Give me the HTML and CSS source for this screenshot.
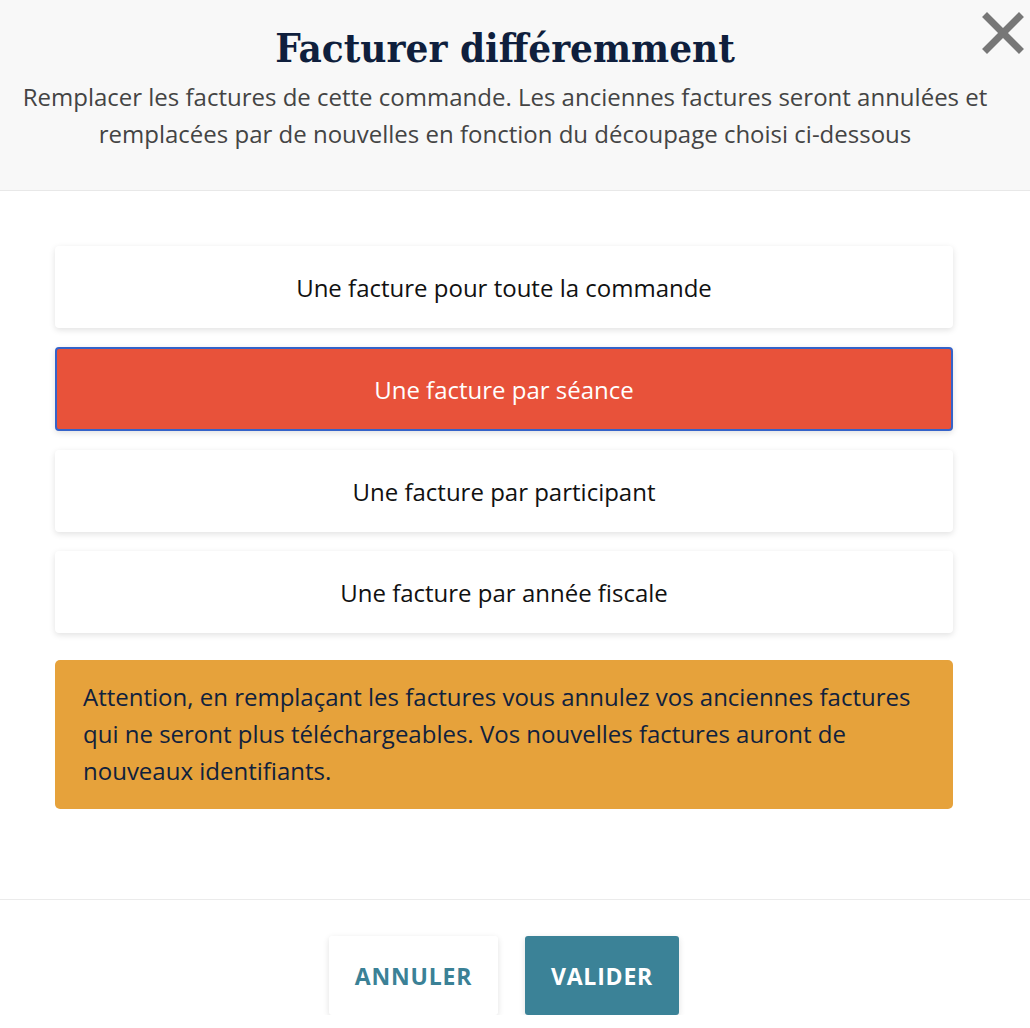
FILE: index.html
```html
<!DOCTYPE html>
<html lang="fr">
<head>
<meta charset="utf-8">
<link rel="stylesheet" href="styles.css">
</head>
<body>
<div class="modal">
  <header class="head">
    <h1 class="title">Facturer différemment</h1>
    <p class="subtitle">Remplacer les factures de cette commande. Les anciennes factures seront annulées et remplacées par de nouvelles en fonction du découpage choisi ci-dessous</p>
    <button class="close" aria-label="Fermer">
      <svg width="42" height="42" viewBox="0 0 42 42"><path d="M5 5 L37 37 M37 5 L5 37" stroke="#777" stroke-width="7" stroke-linecap="square"/></svg>
    </button>
  </header>
  <main class="body">
    <div class="options">
      <button class="option">Une facture pour toute la commande</button>
      <button class="option selected">Une facture par séance</button>
      <button class="option">Une facture par participant</button>
      <button class="option">Une facture par année fiscale</button>
    </div>
    <div class="warning">Attention, en remplaçant les factures vous annulez vos anciennes factures qui ne seront plus téléchargeables. Vos nouvelles factures auront de nouveaux identifiants.</div>
  </main>
  <footer class="foot">
    <button class="btn btn-cancel">ANNULER</button>
    <button class="btn btn-ok">VALIDER</button>
  </footer>
</div>
</body>
</html>
```
FILE: styles.css
```css
html, body { margin: 0; padding: 0; background: #fff; }
body { font-family: "Open Sans", "Noto Sans", sans-serif; }
.modal { width: 1030px; }
.head {
  position: relative;
  background: #f8f8f8;
  border-bottom: 1px solid #e8e8e8;
  height: 191px;
  box-sizing: border-box;
  padding: 22px 20px 0 0;
  text-align: center;
}
.title {
  margin: 0;
  font-family: "DejaVu Serif", serif;
  font-stretch: condensed;
  font-weight: bold;
  font-size: 40px;
  line-height: 52px;
  color: #0f1f3d;
}
.subtitle {
  margin: 4px auto 0;
  width: 1000px;
  font-size: 24px;
  line-height: 37px;
  color: #444;
}
.close {
  position: absolute;
  top: 12px;
  right: 6px;
  border: 0;
  background: none;
  padding: 0;
  width: 42px;
  height: 42px;
}
.body { padding: 55px 77px 90px 55px; }
.options { display: flex; flex-direction: column; gap: 19px; }
.option {
  height: 82px;
  border: 0;
  border-radius: 4px;
  background: #fff;
  box-shadow: 0 2px 6px rgba(0,0,0,0.12);
  font-family: inherit;
  font-size: 24px;
  color: #111;
}
.option.selected {
  background: #e8523a;
  color: #fff;
  border: 2px solid #3563c9;
  height: 84px;
}
.warning {
  margin-top: 27px;
  background: #e6a23b;
  border-radius: 5px;
  padding: 18px 28px 20px;
  font-size: 24px;
  line-height: 37px;
  color: #10213d;
}
.foot {
  border-top: 1px solid #ebebeb;
  display: flex;
  justify-content: center;
  gap: 27px;
  padding: 36px 22px 0 0;
}
.btn {
  height: 79px;
  border: 0;
  border-radius: 3px;
  font-family: inherit;
  font-weight: bold;
  font-size: 23px;
  letter-spacing: 0.8px;
}
.btn-cancel { width: 169px; background: #fff; color: #3b8196; box-shadow: 0 2px 6px rgba(0,0,0,0.12); }
.btn-ok { width: 154px; background: #3b8297; color: #fff; box-shadow: 0 2px 6px rgba(0,0,0,0.12); }
```
